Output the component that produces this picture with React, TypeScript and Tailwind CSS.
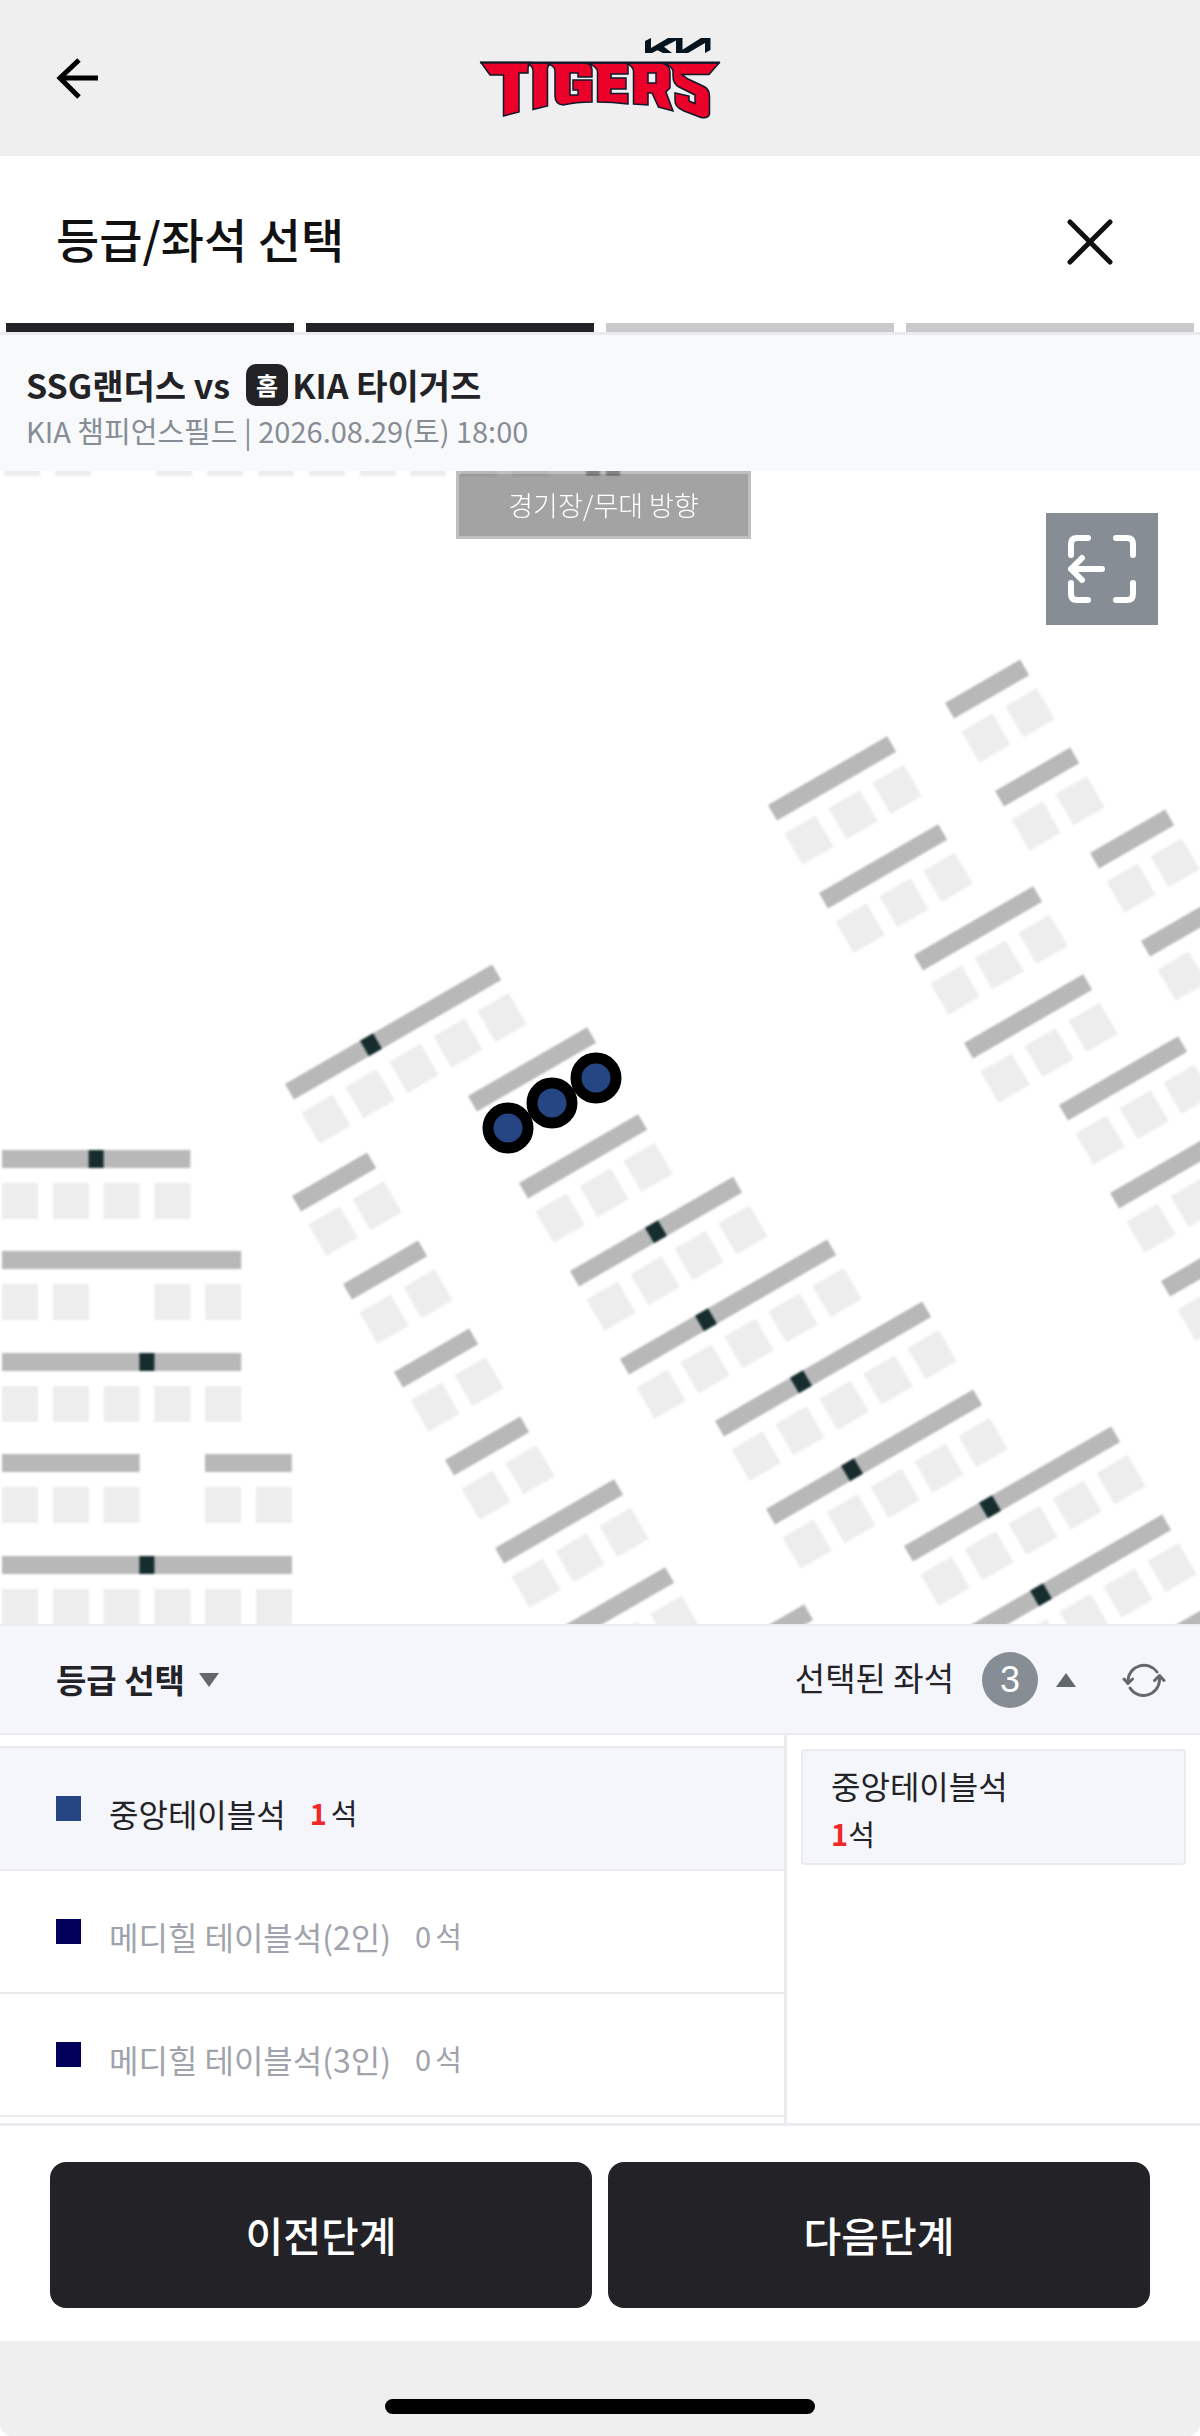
import React, { useState } from 'react';

const SEAT = 36;
const PITCH = 50.8;
const BAR = 18;

type Row = {
  x: number;
  y: number;
  seats: number[];
  mark?: number;
};

const range = (n: number) => Array.from({ length: n }, (_, i) => i);

// infield blocks, no rotation
const flatRows: Row[] = [
  { x: 2, y: 679, seats: range(4), mark: 2 },
  { x: 2, y: 780, seats: [0, 1, 3, 4] },
  { x: 2, y: 882, seats: range(5), mark: 3 },
  { x: 2, y: 983, seats: range(3) },
  { x: 205, y: 983, seats: range(2) },
  { x: 2, y: 1085, seats: range(6), mark: 3 },
];

// blocks on the first base side, turned by 30 degrees
const slantedRows: Row[] = [
  { x: 285, y: 613, seats: range(5), mark: 2 },
  { x: 468, y: 625, seats: [] },
  { x: 519, y: 712, seats: range(3) },
  { x: 570, y: 800, seats: range(4), mark: 2 },
  { x: 620, y: 888, seats: range(5), mark: 2 },
  { x: 715, y: 950, seats: range(5), mark: 2 },
  { x: 766, y: 1038, seats: range(5), mark: 2 },
  { x: 904, y: 1075, seats: range(5), mark: 2 },
  { x: 955, y: 1163, seats: range(5), mark: 2 },
  { x: 1094, y: 1201, seats: range(5) },
  { x: 292, y: 725, seats: range(2) },
  { x: 343, y: 813, seats: range(2) },
  { x: 394, y: 901, seats: range(2) },
  { x: 445, y: 989, seats: range(2) },
  { x: 495, y: 1077, seats: range(3) },
  { x: 546, y: 1165, seats: range(3) },
  { x: 597, y: 1253, seats: range(5) },
  { x: 945, y: 232, seats: range(2) },
  { x: 995, y: 320, seats: range(2) },
  { x: 1090, y: 382, seats: range(2) },
  { x: 1141, y: 470, seats: range(2) },
  { x: 768, y: 334, seats: range(3) },
  { x: 819, y: 422, seats: range(3) },
  { x: 914, y: 484, seats: range(3) },
  { x: 964, y: 572, seats: range(3) },
  { x: 1059, y: 634, seats: range(3) },
  { x: 1110, y: 722, seats: range(3) },
  { x: 1161, y: 810, seats: range(3) },
];

const pickedSeats = [
  { x: 508, y: 657 },
  { x: 552, y: 632 },
  { x: 596, y: 607 },
];

const topSeats = [4, 55, 156, 207, 258, 309, 360, 410, 461, 512];

const grades = [
  { name: '중앙테이블석', count: 1, color: 'bg-[#264683]' },
  { name: '메디힐 테이블석(2인)', count: 0, color: 'bg-[#03005b]' },
  { name: '메디힐 테이블석(3인)', count: 0, color: 'bg-[#03005b]' },
];

function SeatRow({ row, angle }: { row: Row; angle: number }) {
  const last = row.seats.length ? row.seats[row.seats.length - 1] : 2;
  return (
    <g transform={`translate(${row.x} ${row.y}) rotate(${angle})`}>
      <rect width={last * PITCH + SEAT} height={BAR} fill="#b8b8b8" />
      {row.mark && <rect x={row.mark * PITCH - 15} width={15} height={BAR} fill="#162c2e" />}
      {row.seats.map(s => (
        <rect key={s} x={s * PITCH} y={33} width={SEAT} height={SEAT} fill="#ededed" />
      ))}
    </g>
  );
}

function SeatMap() {
  return (
    <svg viewBox="0 0 1200 1153" className="block h-auto w-full" role="img" aria-label="좌석 배치도">
      <g className="blur-[1px]">
        {topSeats.map(x => (
          <rect key={x} x={x} y={-31} width={SEAT} height={SEAT} fill="#ededed" />
        ))}
        <path d="M586 -6 h14 v10 h-14 Z M606 -6 h14 v10 h-14 Z" fill="#777" />
        {flatRows.map((row, i) => (
          <SeatRow key={i} row={row} angle={0} />
        ))}
        {slantedRows.map((row, i) => (
          <SeatRow key={i} row={row} angle={-30} />
        ))}
      </g>
      {pickedSeats.map(s => (
        <circle key={s.x} cx={s.x} cy={s.y} r={20} fill="#264683" stroke="#000" strokeWidth={11} />
      ))}
    </svg>
  );
}

function TigersLogo() {
  return (
    <svg viewBox="0 0 280 120" className="h-[120px] w-[280px]" role="img" aria-label="KIA TIGERS">
      <g fill="#05141f">
        <path d="M185 21 L191 18 V33 H185 Z" />
        <path d="M191 28 L208 18 H222.500 V33 H216 V20.500 L192 33 H185 Z" />
        <path d="M197 30 L203 26 L212 33 H203 Z" />
        <path d="M219 33 H228 L245 23 V33 L250.500 30 V18 H241 L222 30 Z" />
      </g>
      <g fill="#ea0029" stroke="#0d1a2b" strokeWidth="1.500" strokeLinejoin="miter">
        <path d="M21 42.500 H71 Q68 45 68 48 V53 H59 V92 L43.500 96 V55 H30 Z" />
        <path d="M68 43 H92 Q87.500 45 87.500 49 V86 L73 89.500 V51 Q73 46 68 44 Z" />
        <path d="M88 43 H126 Q132 44 132 50 V57 H118 V53 H110 V75 H118 V70 H113 V60 H132 V82 Q116 82 103 85 Q95 84 95 76 V51 Q95 46 88 44 Z" />
        <path d="M127 43 H168 V54 H151 V58 H166 V69 H151 V73.500 H168 V84 Q152 82 137.500 82 V52 Q137 46 127 43 Z" />
        <path d="M166 43 H200 Q210 44 210 52 V68 L206 72 L213 91 L198.500 87 L192 73 H188 V85 L173.500 84 V51 Q173 46 166 43 Z" />
        <path d="M203 43 H259 L249 54.500 H222 L228 59 L243 66 Q249.500 69 249.500 76 V94 Q248 99 241 97.500 L224 91 Q214 87 215 79 V73 L229 76 V81 L235 83.500 V75 L219 67 Q213 64 213 56 V51 Q211 45 203 43 Z" />
      </g>
      <path d="M188 53 H196 V63 H188 Z" fill="#efefef" stroke="#0d1a2b" strokeWidth="1.500" />
      <path d="M20 42.500 H260" stroke="#0d1a2b" strokeWidth="2" />
    </svg>
  );
}

function BackIcon() {
  return (
    <svg viewBox="0 0 44 44" className="size-11" fill="none" stroke="#000" strokeWidth="5">
      <path d="M23 2 L4 20 L23 39" />
      <path d="M5 20 H42" />
    </svg>
  );
}

function FitIcon() {
  return (
    <svg viewBox="0 0 112 112" className="size-28" fill="none" stroke="#fff" strokeWidth="6" strokeLinecap="round" strokeLinejoin="round">
      <path d="M25 42 V31 Q25 25 31 25 H42" />
      <path d="M70 25 H81 Q87 25 87 31 V42" />
      <path d="M87 70 V81 Q87 87 81 87 H70" />
      <path d="M42 87 H31 Q25 87 25 81 V70" />
      <path d="M36 45 L25 56 L36 67 M25 56 H56" />
    </svg>
  );
}

function RefreshIcon() {
  return (
    <svg viewBox="0 0 44 44" className="size-11" fill="none" stroke="#62686d" strokeWidth="3" strokeLinecap="round" strokeLinejoin="round">
      <path d="M6 25 V22 A16 16 0 0 1 35 14" />
      <path d="M8 30 A16 16 0 0 0 37.500 22 V18" />
      <path d="M2 21 L6 25.500 L10.500 21" />
      <path d="M32.500 22.500 L37.500 17.500 L42 22.500" />
    </svg>
  );
}

function App() {
  const [selected, setSelected] = useState(0);

  return (
    <div className="flex min-h-screen flex-col bg-white font-['Noto_Sans_CJK_KR',sans-serif] text-[#222227]">
      <header className="grid h-[156px] grid-cols-[1fr_auto_1fr] items-center bg-[#efefef] px-14 pt-1">
        <button type="button" aria-label="뒤로" className="justify-self-start">
          <BackIcon />
        </button>
        <TigersLogo />
      </header>

      <div className="flex h-[167px] items-center justify-between pt-1 pr-[86px] pl-14">
        <h1 className="pb-2 text-[47px] leading-[72px] font-medium text-[#111]">등급/좌석 선택</h1>
        <button type="button" aria-label="닫기">
          <svg viewBox="0 0 48 48" className="size-12" stroke="#111" strokeWidth="5" strokeLinecap="round">
            <path d="M4 4 L44 44 M44 4 L4 44" />
          </svg>
        </button>
      </div>

      <div className="flex gap-3 border-b-3 border-[#ebebef] px-[6px]">
        <span className="h-[9px] flex-1 bg-[#222227]" />
        <span className="h-[9px] flex-1 bg-[#222227]" />
        <span className="h-[9px] flex-1 bg-[#cacaca]" />
        <span className="h-[9px] flex-1 bg-[#cacaca]" />
      </div>

      <div className="h-[136px] bg-[#f8f9fb] px-[26px] pt-[28px]">
        <h2 className="flex items-center text-[34px] leading-[44px] font-bold">
          SSG랜더스 vs
          <span className="mr-1 ml-4 flex size-[42px] items-center justify-center rounded-[10px] bg-[#222227] text-[24px] text-white">홈</span>
          KIA 타이거즈
        </h2>
        <p className="text-[29px] leading-[46px] text-[#868d95]">KIA 챔피언스필드 | 2026.08.29(토) 18:00</p>
      </div>

      <main className="relative overflow-hidden">
        <SeatMap />
        <div className="absolute top-0 left-[38%] flex h-[68px] w-[295px] items-center justify-center border-3 border-white/30 bg-black/36 text-[27px] font-light text-white">
          경기장/무대 방향
        </div>
        <button type="button" aria-label="전체 보기" className="absolute top-[42px] right-[42px] bg-[#868d95]">
          <FitIcon />
        </button>
      </main>

      <div className="flex h-[111px] items-center border-y-2 border-[#ebebef] bg-[#f4f6fb] pr-[34px] pl-14">
        <button type="button" className="flex items-center gap-[14px] text-[33px] font-bold">
          등급 선택
          <svg viewBox="0 0 20 14" className="h-[14px] w-5" fill="#62686d">
            <path d="M0 0 H20 L10 14 Z" />
          </svg>
        </button>
        <button type="button" className="ml-auto flex items-center text-[33px]">
          <span className="pb-1">선택된 좌석</span>
          <span className="ml-7 flex size-14 items-center justify-center rounded-full bg-[#868d95] font-['Liberation_Sans',sans-serif] text-[36px] leading-none text-white">3</span>
          <svg viewBox="0 0 20 14" className="ml-[18px] h-[14px] w-5" fill="#62686d">
            <path d="M0 14 H20 L10 0 Z" />
          </svg>
        </button>
        <button type="button" aria-label="새로고침" className="ml-[46px]">
          <RefreshIcon />
        </button>
      </div>

      <div className="grid grid-cols-[787fr_413fr] border-b-3 border-[#ebebef]">
        <ul className="border-r-3 border-[#ebebef] pt-[11px] pb-[6px]">
          {grades.map((g, i) => (
            <li key={g.name} className={`border-[#ebebef] ${i === 0 ? 'border-y-2' : 'border-b-2'}`}>
              <button
                type="button"
                onClick={() => setSelected(i)}
                className={`flex h-[121px] w-full items-center pl-14 ${selected === i ? 'bg-[#f4f6fb]' : ''} ${g.count ? '' : 'text-[#a0a3ab]'}`}
              >
                <span className={`size-[25px] ${g.color}`} />
                <span className="ml-7 pt-2 text-[32px]">{g.name}</span>
                <span className="ml-6 flex items-center gap-1 pt-2 text-[29px]">
                  {g.count ? <b className="text-[#f02828]">{g.count}</b> : g.count}
                  <span>석</span>
                </span>
              </button>
            </li>
          ))}
        </ul>
        <div className="px-[14px] pt-[14px]">
          <div className="h-[116px] rounded-sm border-2 border-[#ebebef] bg-[#f4f6fb] px-7 pt-[10px]">
            <p className="text-[32px] leading-[48px]">중앙테이블석</p>
            <p className="text-[29px] leading-[48px]">
              <b className="text-[#f02828]">1</b>석
            </p>
          </div>
        </div>
      </div>

      <div className="grid grid-cols-2 gap-4 px-[50px] pt-9 pb-[33px]">
        <button type="button" className="h-[146px] rounded-2xl bg-[#222227] text-[41px] font-medium text-white">이전단계</button>
        <button type="button" className="h-[146px] rounded-2xl bg-[#222227] text-[41px] font-medium text-white">다음단계</button>
      </div>

      <footer className="flex flex-1 items-end justify-center rounded-b-xl bg-[#efefef] pt-[58px] pb-[22px]">
        <span className="h-[15px] w-[430px] rounded-full bg-black" />
      </footer>
    </div>
  );
}

export default App;
